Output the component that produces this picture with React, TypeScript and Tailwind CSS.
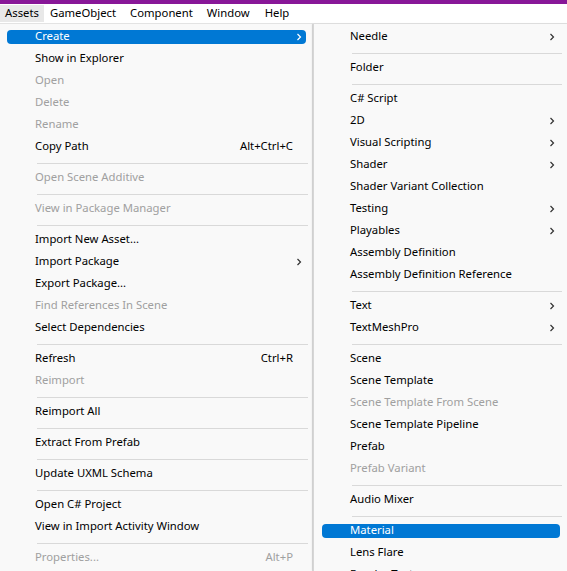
import React from "react";

type Item =
  | { sep: true }
  | { label: string; disabled?: boolean; shortcut?: string; sub?: boolean; active?: boolean };

const left: Item[] = [
  { label: "Create", sub: true, active: true },
  { label: "Show in Explorer" },
  { label: "Open", disabled: true },
  { label: "Delete", disabled: true },
  { label: "Rename", disabled: true },
  { label: "Copy Path", shortcut: "Alt+Ctrl+C" },
  { sep: true },
  { label: "Open Scene Additive", disabled: true },
  { sep: true },
  { label: "View in Package Manager", disabled: true },
  { sep: true },
  { label: "Import New Asset..." },
  { label: "Import Package", sub: true },
  { label: "Export Package..." },
  { label: "Find References In Scene", disabled: true },
  { label: "Select Dependencies" },
  { sep: true },
  { label: "Refresh", shortcut: "Ctrl+R" },
  { label: "Reimport", disabled: true },
  { sep: true },
  { label: "Reimport All" },
  { sep: true },
  { label: "Extract From Prefab" },
  { sep: true },
  { label: "Update UXML Schema" },
  { sep: true },
  { label: "Open C# Project" },
  { label: "View in Import Activity Window" },
  { sep: true },
  { label: "Properties...", disabled: true, shortcut: "Alt+P" },
];

const right: Item[] = [
  { label: "Needle", sub: true },
  { sep: true },
  { label: "Folder" },
  { sep: true },
  { label: "C# Script" },
  { label: "2D", sub: true },
  { label: "Visual Scripting", sub: true },
  { label: "Shader", sub: true },
  { label: "Shader Variant Collection" },
  { label: "Testing", sub: true },
  { label: "Playables", sub: true },
  { label: "Assembly Definition" },
  { label: "Assembly Definition Reference" },
  { sep: true },
  { label: "Text", sub: true },
  { label: "TextMeshPro", sub: true },
  { sep: true },
  { label: "Scene" },
  { label: "Scene Template" },
  { label: "Scene Template From Scene", disabled: true },
  { label: "Scene Template Pipeline" },
  { label: "Prefab" },
  { label: "Prefab Variant", disabled: true },
  { sep: true },
  { label: "Audio Mixer" },
  { sep: true },
  { label: "Material", active: true },
  { label: "Lens Flare" },
  { label: "Render Texture" },
];

function Chevron({ white }: { white?: boolean }) {
  return (
    <svg width="6" height="8" viewBox="0 0 6 8" className="shrink-0 block">
      <polyline
        points="1.5,1 4.5,4 1.5,7"
        fill="none"
        stroke={white ? "#ffffff" : "#333333"}
        strokeWidth="1.2"
      />
    </svg>
  );
}

function Menu({
  items,
  mx,
  sepL,
  sepR,
  scPr,
  chPr,
}: {
  items: Item[];
  mx: string;
  sepL: string;
  sepR: string;
  scPr: string;
  chPr: string;
}) {
  return (
    <div className="pt-[2px]">
      {items.map((it, i) => {
        if ("sep" in it) {
          return (
            <div key={i} className={`h-[9px] pt-[5px] ${sepL} ${sepR}`}>
              <div className="h-px bg-[#d9d9d9]" />
            </div>
          );
        }
        const color = it.active
          ? "text-white"
          : it.disabled
          ? "text-[#a0a0a0]"
          : "text-[#000000]";
        return (
          <div key={i} className={`h-[22px] py-[4px] ${mx}`}>
            <div
              className={`h-[14px] flex items-center rounded-[4px] pl-[28px] ${
                it.active ? "bg-[#0078d4]" : ""
              } ${color}`}
            >
              <span className="flex-1 whitespace-nowrap leading-[14px] relative -top-px">{it.label}</span>
              {it.shortcut && (
                <span className={`whitespace-nowrap leading-[14px] relative -top-px ${scPr}`}>{it.shortcut}</span>
              )}
              {it.sub && (
                <span className={chPr}>
                  <Chevron white={it.active} />
                </span>
              )}
            </div>
          </div>
        );
      })}
    </div>
  );
}

export default function App() {
  return (
    <div
      className="w-[567px] h-[571px] overflow-hidden bg-[#f9f9f9] text-[11.3px]"
      style={{ fontFamily: '"Noto Sans", "Open Sans", sans-serif' }}
    >
      <div className="h-[4px] bg-[#881798]" />
      <div className="h-[20px] bg-white border-b border-[#e3e3e3] flex items-stretch text-black">
        <div className="bg-[#e8e8e8] pl-[5px] w-[44px] flex items-center my-[1px]">Assets</div>
        <div className="flex items-center ml-[6px]">GameObject</div>
        <div className="flex items-center ml-[14px]">Component</div>
        <div className="flex items-center ml-[14px]">Window</div>
        <div className="flex items-center ml-[15px]">Help</div>
      </div>
      <div className="relative h-[547px]">
        <div className="w-[313px] h-full bg-[#f9f9f9] border-r border-[#dcdcdc]">
          <Menu items={left} mx="mx-[7px] mr-[6px]" sepL="ml-[37px]" sepR="mr-[4px]" scPr="pr-[13px]" chPr="pr-[4px]" />
        </div>
        <div className="absolute left-[313px] top-0 w-[255px] h-full bg-[#f9f9f9] border-l border-[#d6d6d6] shadow-[-1px_0_2px_rgba(0,0,0,0.08)]">
          <Menu items={right} mx="mx-[8px]" sepL="ml-[38px]" sepR="mr-[6px]" scPr="pr-[13px]" chPr="pr-[5px]" />
        </div>
      </div>
    </div>
  );
}
